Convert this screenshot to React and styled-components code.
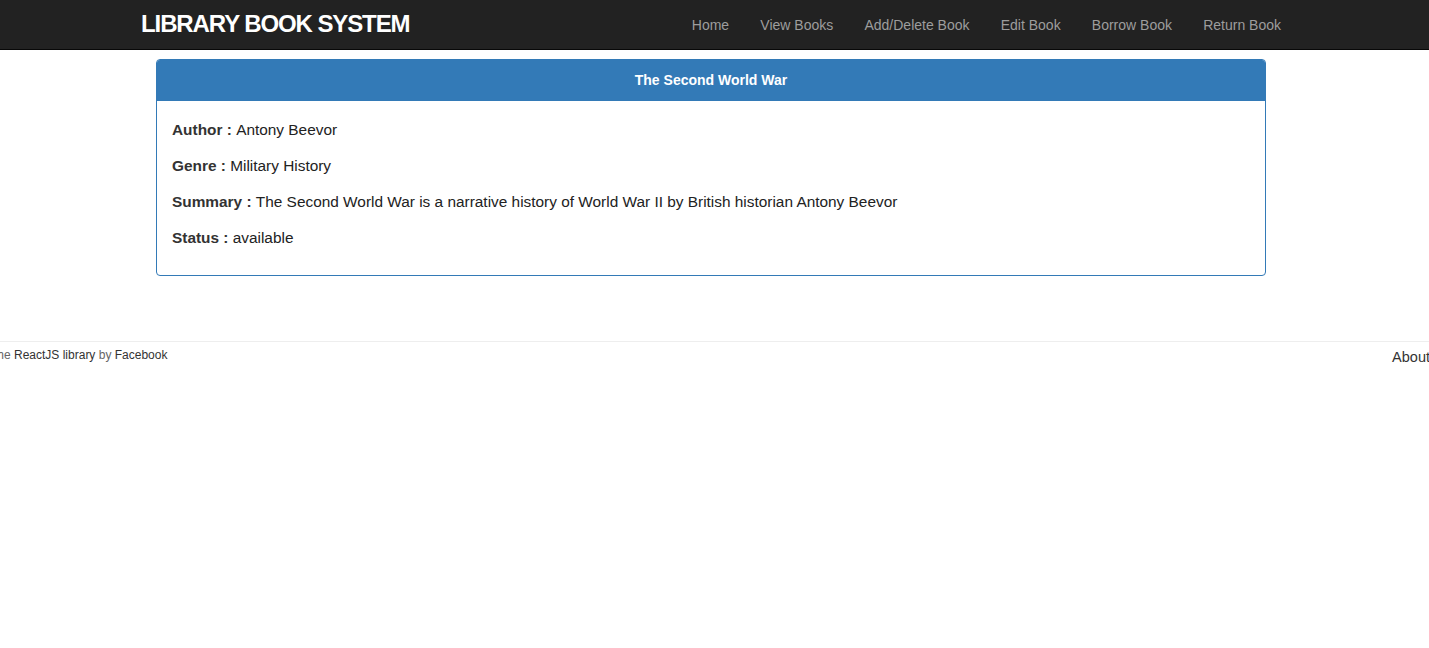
import React from 'react';
import styled, { createGlobalStyle } from 'styled-components';

const Global = createGlobalStyle`
body {
  margin: 0;
  font-family: 'Liberation Sans', Arial, sans-serif;
  font-size: 14px;
  color: #333;
  background: #fff;
  overflow-x: hidden;
}
`

const Navbar = styled.nav`
height: 49px;
background-color: #222;
border-bottom: 1px solid #080808;
padding-right: 7px;
`

const NavInner = styled.div`
width: 1170px;
margin: 0 auto;
padding: 0 15px;
box-sizing: border-box;
height: 100%;
display: flex;
align-items: center;
justify-content: space-between;
`

const Brand = styled.div`
color: #fff;
font-weight: bold;
font-size: 24px;
letter-spacing: -1.1px;
margin-top: -1px;
`

const Links = styled.ul`
display: flex;
list-style: none;
margin: 0 -15px 0 0;
padding: 0;
`

const NavLink = styled.li`
padding: 0 15.6px;
color: #9d9d9d;
font-size: 14px;
line-height: 44px;
&:last-child {
  padding-right: 15px;
}
`

const Main = styled.main`
padding-right: 7px;
`

const Panel = styled.div`
width: 1110px;
margin: 9px auto 0;
border: 1px solid #337ab7;
border-radius: 4px;
box-sizing: border-box;
overflow: hidden;
`

const PanelHeading = styled.div`
background-color: #337ab7;
color: #fff;
font-weight: bold;
font-size: 14px;
text-align: center;
height: 41px;
line-height: 41px;
`

const PanelBody = styled.div`
padding: 19px 15px 11px;
`

const Field = styled.p`
margin: 0 0 16px;
font-size: 15.4px;
line-height: 20px;
color: #222;
`

const Label = styled.b`
color: #333;
`

const Footer = styled.footer`
margin-top: 65px;
border-top: 1px solid #eee;
display: flex;
justify-content: space-between;
align-items: flex-start;
`

const Credit = styled.div`
font-size: 12px;
color: #666;
margin-left: -6px;
padding-top: 6px;
`

const CreditLink = styled.span`
color: #333;
`

const About = styled.div`
font-size: 14.5px;
color: #333;
margin-right: -1px;
padding-top: 7px;
`

const book = {
  title: 'The Second World War',
  author: 'Antony Beevor',
  genre: 'Military History',
  summary: 'The Second World War is a narrative history of World War II by British historian Antony Beevor',
  status: 'available'
}

export default function App(){
    const links = ['Home', 'View Books', 'Add/Delete Book', 'Edit Book', 'Borrow Book', 'Return Book']
    return (
        <>
        <Global/>
        <Navbar>
            <NavInner>
                <Brand>LIBRARY BOOK SYSTEM</Brand>
                <Links>
                    {links.map(l => <NavLink key={l}>{l}</NavLink>)}
                </Links>
            </NavInner>
        </Navbar>

        <Main>
            <Panel>
                <PanelHeading>{book.title}</PanelHeading>
                <PanelBody>
                    <Field><Label>Author : </Label>{book.author}</Field>
                    <Field><Label>Genre : </Label>{book.genre}</Field>
                    <Field><Label>Summary : </Label>{book.summary}</Field>
                    <Field><Label>Status : </Label>{book.status}</Field>
                </PanelBody>
            </Panel>
        </Main>

        <Footer>
            <Credit>the <CreditLink>ReactJS library</CreditLink> by <CreditLink>Facebook</CreditLink></Credit>
            <About>About</About>
        </Footer>
        </>
    )
}
